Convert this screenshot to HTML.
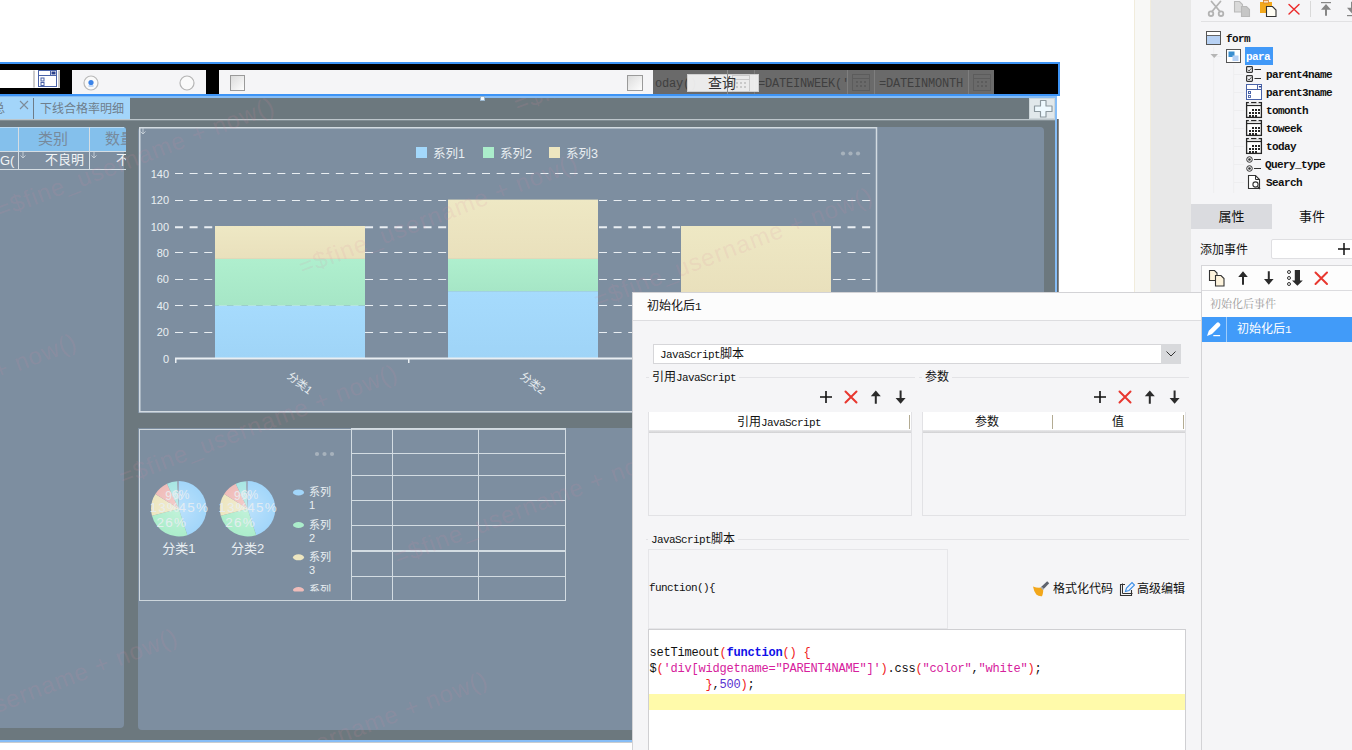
<!DOCTYPE html>
<html lang="zh-CN">
<head>
<meta charset="utf-8">
<title>FineReport Designer</title>
<style>
html,body{margin:0;padding:0;}
body{width:1352px;height:750px;position:relative;overflow:hidden;background:#fff;
  font-family:"Liberation Sans","Noto Sans CJK SC",sans-serif;font-size:12px;color:#222;}
.a{position:absolute;box-sizing:border-box;}
.sim{font-family:"Liberation Mono","Noto Sans CJK SC",monospace;font-size:11px;letter-spacing:-0.6px;}
.cjk{font-family:"Liberation Sans","Noto Sans CJK SC",sans-serif;}
.nw{white-space:nowrap;}
.wm{position:absolute;white-space:nowrap;font-size:24px;color:rgba(220,140,165,0.14);transform-origin:0 100%;transform:rotate(-21deg);font-family:"Liberation Sans",sans-serif;letter-spacing:1px;}
.hl{position:absolute;height:1px;background:#d5dde3;}
.vl{position:absolute;width:1px;background:#d5dde3;}
.code{font-family:"Liberation Mono",monospace;font-size:12px;letter-spacing:-0.2px;white-space:pre;line-height:16px;color:#111;}
.code .r{color:#f02020;} .code .b{color:#1010e8;font-weight:bold;} .code .p{color:#d6209c;} .code .n{color:#5a30d0;}
</style>
</head>
<body>

<!-- ================= DESIGNER AREA ================= -->
<div id="designer" class="a" style="left:0;top:0;width:1060px;height:750px;overflow:hidden;">
  <!-- dark background of form body -->
  <div class="a" style="left:0;top:96px;width:1055px;height:644px;background:#6c787e;"></div>
  <!-- light blue selection frame -->
  <div class="a" style="left:0;top:96px;width:1057px;height:2px;background:#86bdf6;"></div>
  <div class="a" style="left:1055px;top:96px;width:2px;height:646px;background:#86bdf6;"></div>
  <div class="a" style="left:0;top:740px;width:1057px;height:2px;background:#86bdf6;"></div>
  <div class="a" style="left:0;top:742px;width:1059px;height:1px;background:#c9cdd0;"></div>
  <div class="a" style="left:1057px;top:119px;width:2px;height:624px;background:linear-gradient(90deg,#4a4f53,#9a9fa3);"></div>

  <!-- parameter bar -->
  <div class="a" style="left:-2px;top:62px;width:1062px;height:34px;background:#000;border:2px solid #3d94f6;"></div>
  <div class="a" style="left:0;top:70px;width:34px;height:18px;background:#fff;"></div>
  <svg class="a" style="left:33px;top:70px;" width="27" height="18" viewBox="0 0 27 18">
    <rect x="0" y="0" width="27" height="18" fill="#fff"/>
    <rect x="0.5" y="0.5" width="1" height="17" fill="#999"/>
    <rect x="5.5" y="0.5" width="18" height="16" fill="#fff" stroke="#4a63a8" stroke-width="1"/>
    <line x1="5" y1="5.5" x2="24" y2="5.5" stroke="#4a63a8"/>
    <line x1="17.500" y1="0" x2="17.500" y2="5" stroke="#4a63a8"/>
    <rect x="18.500" y="1.500" width="4" height="3" fill="#2a3f8a"/>
    <rect x="8" y="8" width="3" height="3" fill="none" stroke="#4a63a8"/>
    <rect x="8" y="12.500" width="3" height="3" fill="none" stroke="#4a63a8"/>
    <rect x="25.500" y="0.500" width="1" height="17" fill="#999"/>
  </svg>
  <div class="a" style="left:72px;top:70px;width:134px;height:24px;background:#f5f5f7;"></div>
  <svg class="a" style="left:82px;top:74px;" width="18" height="18" viewBox="0 0 18 18">
    <circle cx="9" cy="9" r="7" fill="#fafafa" stroke="#b9b9b9" stroke-width="1.2"/>
    <circle cx="9" cy="8.500" r="2.600" fill="#3b83e8"/>
    <rect x="6.500" y="11.500" width="5" height="1" fill="#8ab4ee"/>
  </svg>
  <svg class="a" style="left:178px;top:74px;" width="18" height="18" viewBox="0 0 18 18">
    <circle cx="9" cy="9" r="7" fill="#fafafa" stroke="#b4b4b4" stroke-width="1.2"/>
  </svg>
  <div class="a" style="left:219px;top:70px;width:434px;height:24px;background:#f5f5f7;"></div>
  <div class="a" style="left:230px;top:75px;width:15px;height:16px;border:1px solid #9a9a9a;background:linear-gradient(135deg,#dcdcdc,#fdfdfd);"></div>
  <div class="a" style="left:627px;top:75px;width:16px;height:16px;border:1px solid #9a9a9a;background:linear-gradient(135deg,#dcdcdc,#fdfdfd);"></div>
  <!-- grey disabled fields -->
  <div class="a" style="left:653px;top:70px;width:341px;height:24px;background:#6a6a6a;"></div>
  <div class="a sim nw" style="left:655px;top:77px;color:#3f3f3f;font-size:12px;letter-spacing:-0.2px;">oday()</div>
  <div class="a" style="left:727px;top:70px;width:1px;height:24px;background:#7e7e7e;"></div>
  <div class="a" style="left:754px;top:70px;width:1px;height:24px;background:#7e7e7e;"></div>
  <div class="a" style="left:847px;top:70px;width:1px;height:24px;background:#7e7e7e;"></div>
  <div class="a" style="left:874px;top:70px;width:1px;height:24px;background:#7e7e7e;"></div>
  <div class="a" style="left:968px;top:70px;width:1px;height:24px;background:#7e7e7e;"></div>
  <div class="a sim nw" style="left:758px;top:77px;color:#3f3f3f;font-size:12px;letter-spacing:-0.2px;">=DATEINWEEK('</div>
  <div class="a sim nw" style="left:879px;top:77px;color:#3f3f3f;font-size:12px;letter-spacing:-0.2px;">=DATEINMONTH</div>
  <svg class="a" style="left:851px;top:72px;" width="20" height="20" viewBox="0 0 20 20"><g fill="none" stroke="#5c5c5c"><rect x="1.500" y="2.500" width="17" height="16"/><line x1="1" y1="6.500" x2="19" y2="6.500"/></g><g fill="#5c5c5c"><rect x="5" y="9" width="2" height="2"/><rect x="9" y="9" width="2" height="2"/><rect x="13" y="9" width="2" height="2"/><rect x="5" y="13" width="2" height="2"/><rect x="9" y="13" width="2" height="2"/><rect x="13" y="13" width="2" height="2"/></g></svg>
  <svg class="a" style="left:972px;top:72px;" width="20" height="20" viewBox="0 0 20 20"><g fill="none" stroke="#5c5c5c"><rect x="1.500" y="2.500" width="17" height="16"/><line x1="1" y1="6.500" x2="19" y2="6.500"/></g><g fill="#5c5c5c"><rect x="5" y="9" width="2" height="2"/><rect x="9" y="9" width="2" height="2"/><rect x="13" y="9" width="2" height="2"/><rect x="5" y="13" width="2" height="2"/><rect x="9" y="13" width="2" height="2"/><rect x="13" y="13" width="2" height="2"/></g></svg>
  <!-- query button -->
  <div class="a" style="left:687px;top:74px;width:72px;height:18px;background:rgba(246,246,246,0.92);border:1px solid #d0d0d0;"></div>
  <svg class="a" style="left:731px;top:73px;" width="20" height="20" viewBox="0 0 20 20"><g fill="none" stroke="#c9c9c9"><rect x="1.500" y="2.500" width="17" height="16"/><line x1="1" y1="6.500" x2="19" y2="6.500"/></g><g fill="#c9c9c9"><rect x="5" y="9" width="2" height="2"/><rect x="9" y="9" width="2" height="2"/><rect x="13" y="9" width="2" height="2"/><rect x="5" y="13" width="2" height="2"/><rect x="9" y="13" width="2" height="2"/><rect x="13" y="13" width="2" height="2"/></g></svg>
  <div class="a" style="left:727px;top:70px;width:1px;height:24px;background:#8c8c8c;"></div>
  <div class="a cjk nw" style="left:708px;top:74px;font-size:14px;line-height:19px;color:#333;">查询</div>

  <!-- tab strip -->
  <div class="a" style="left:0;top:97px;width:130px;height:22px;background:#a3d5fa;"></div>
  <div class="a" style="left:33px;top:98px;width:1px;height:21px;background:#6e7c88;"></div>
  <div class="a cjk nw" style="left:-7px;top:100px;font-size:12px;line-height:18px;color:#6f7e8c;">总</div>
  <svg class="a" style="left:19px;top:100px;" width="10" height="10" viewBox="0 0 10 10"><path d="M1 1L9 9M9 1L1 9" stroke="#7d8c9a" stroke-width="1.100" fill="none"/></svg>
  <div class="a cjk nw" style="left:40px;top:100px;font-size:12px;line-height:18px;color:#6f7e8c;">下线合格率明细</div>
  <div class="a" style="left:0;top:119px;width:1055px;height:1px;background:#bcc5ca;"></div><div class="a" style="left:0;top:120px;width:1055px;height:1px;background:#828e94;"></div>
  <div class="a" style="left:480px;top:96px;width:5px;height:5px;background:#f4f8fb;border:1px solid #9bb7cf;"></div>
  <!-- plus button -->
  <div class="a" style="left:1029px;top:98px;width:26px;height:21px;background:#e1e8eb;border:1px solid #cdd6da;"></div>
  <svg class="a" style="left:1032px;top:98px;" width="23" height="21" viewBox="0 0 23 21"><path d="M8.500 2.500h5.500v5.500h6v5.500h-6v5.500h-5.500v-5.500h-6v-5.500h6z" fill="#eef9fe" stroke="#8c989e" stroke-width="1.150" stroke-linejoin="round"/></svg>

  <!-- left panel -->
  <div class="a" style="left:0;top:127px;width:124px;height:601px;background:#7d8ea0;border-radius:0 4px 4px 0;"></div>
  <div class="a" style="left:0;top:127px;width:126px;height:24px;background:#84c0ec;border-radius:0 3px 0 0;overflow:hidden;">
    <div class="a cjk nw" style="left:38px;top:2px;font-size:15px;line-height:20px;color:#778a9c;">类别</div>
    <div class="a cjk nw" style="left:105px;top:2px;font-size:15px;line-height:20px;color:#778a9c;">数量</div>
  </div>
  <div class="a" style="left:0;top:151px;width:126px;height:18px;overflow:hidden;">
    <div class="a nw" style="left:0px;top:1px;font-size:13px;line-height:17px;color:#f2f5f7;">G(</div>
    <div class="a cjk nw" style="left:45px;top:0px;font-size:13px;line-height:17px;color:#f2f5f7;">不良明</div>
    <div class="a cjk nw" style="left:116px;top:0px;font-size:13px;line-height:17px;color:#f2f5f7;">不良</div>
  </div>
  <div class="hl" style="left:0;top:127px;width:124px;background:#b9d9f2;"></div>
  <div class="hl" style="left:0;top:151px;width:126px;"></div>
  <div class="hl" style="left:0;top:169px;width:126px;"></div>
  <div class="vl" style="left:18px;top:127px;height:42px;"></div>
  <div class="vl" style="left:89px;top:127px;height:42px;"></div>

  <!-- main panel -->
  <div class="a" style="left:138px;top:127px;width:906px;height:603px;background:#7d8ea0;border-radius:4px;"></div>
  <div class="a" style="left:138px;top:413px;width:906px;height:15px;background:#6c787e;"></div>
<!--CHART-->
<svg class="a" style="left:0;top:0;" width="1060" height="750" viewBox="0 0 1060 750" font-family="'Liberation Sans','Noto Sans CJK SC',sans-serif">
<defs><linearGradient id="gb" x1="0" y1="0" x2="0" y2="1"><stop offset="0" stop-color="#a6dbfd"/><stop offset="1" stop-color="#9fd4f7"/></linearGradient><linearGradient id="gg" x1="0" y1="0" x2="0" y2="1"><stop offset="0" stop-color="#afefce"/><stop offset="1" stop-color="#a6e6c6"/></linearGradient><linearGradient id="gc" x1="0" y1="0" x2="0" y2="1"><stop offset="0" stop-color="#eee8c4"/><stop offset="1" stop-color="#e9e0bc"/></linearGradient></defs>
<rect x="139.750" y="127.750" width="736.750" height="284" fill="none" stroke="#d3dbe1" stroke-width="1.500"/>
<rect x="416" y="147" width="11" height="11" fill="#a3d8fb"/>
<text x="433" y="157.500" font-size="12.500" fill="#e9eef2">系列1</text>
<rect x="483" y="147" width="11" height="11" fill="#abedcb"/>
<text x="500" y="157.500" font-size="12.500" fill="#e9eef2">系列2</text>
<rect x="549" y="147" width="11" height="11" fill="#ede6c0"/>
<text x="566" y="157.500" font-size="12.500" fill="#e9eef2">系列3</text>
<circle cx="843" cy="153.500" r="2.100" fill="#a7b2bc"/>
<circle cx="850.5" cy="153.500" r="2.100" fill="#a7b2bc"/>
<circle cx="858" cy="153.500" r="2.100" fill="#a7b2bc"/>
<text x="169" y="362.5" font-size="11" fill="#e9eef2" text-anchor="end">0</text>
<text x="169" y="336.1" font-size="11" fill="#e9eef2" text-anchor="end">20</text>
<line x1="175" y1="332.5" x2="873" y2="332.5" stroke="#e9eef2" stroke-width="1" stroke-dasharray="8 6.620"/>
<text x="169" y="309.7" font-size="11" fill="#e9eef2" text-anchor="end">40</text>
<line x1="175" y1="305.5" x2="873" y2="305.5" stroke="#e9eef2" stroke-width="1" stroke-dasharray="8 6.620"/>
<text x="169" y="283.3" font-size="11" fill="#e9eef2" text-anchor="end">60</text>
<line x1="175" y1="279.5" x2="873" y2="279.5" stroke="#e9eef2" stroke-width="1" stroke-dasharray="8 6.620"/>
<text x="169" y="256.9" font-size="11" fill="#e9eef2" text-anchor="end">80</text>
<line x1="175" y1="252.5" x2="873" y2="252.5" stroke="#e9eef2" stroke-width="1" stroke-dasharray="8 6.620"/>
<text x="169" y="230.5" font-size="11" fill="#e9eef2" text-anchor="end">100</text>
<line x1="175" y1="227.3" x2="873" y2="227.3" stroke="#e9eef2" stroke-width="2" stroke-dasharray="8 6.620"/>
<text x="169" y="204.1" font-size="11" fill="#e9eef2" text-anchor="end">120</text>
<line x1="175" y1="200.5" x2="873" y2="200.5" stroke="#e9eef2" stroke-width="1" stroke-dasharray="8 6.620"/>
<text x="169" y="177.7" font-size="11" fill="#e9eef2" text-anchor="end">140</text>
<line x1="175" y1="173.5" x2="873" y2="173.5" stroke="#e9eef2" stroke-width="1" stroke-dasharray="8 6.620"/>
<rect x="215" y="305.5" width="150" height="52.5" fill="url(#gb)"/>
<rect x="215" y="258.9" width="150" height="46.6" fill="url(#gg)"/>
<rect x="215" y="226.0" width="150" height="32.9" fill="url(#gc)"/>
<rect x="448" y="291.2" width="150" height="66.8" fill="url(#gb)"/>
<rect x="448" y="258.9" width="150" height="32.3" fill="url(#gg)"/>
<rect x="448" y="199.6" width="150" height="59.3" fill="url(#gc)"/>
<rect x="681" y="325.0" width="150" height="33.0" fill="url(#gb)"/>
<rect x="681" y="292.0" width="150" height="33.0" fill="url(#gg)"/>
<rect x="681" y="226.0" width="150" height="66.0" fill="url(#gc)"/>
<rect x="175" y="357.500" width="699" height="2" fill="#e9eef2"/>
<rect x="175" y="358" width="1.500" height="5" fill="#e9eef2"/>
<rect x="408" y="358" width="1.500" height="5" fill="#e9eef2"/>
<rect x="641" y="358" width="1.500" height="5" fill="#e9eef2"/>
<rect x="873" y="358" width="1.500" height="5" fill="#e9eef2"/>
<text x="300" y="387" font-size="11" fill="#e9eef2" text-anchor="middle" transform="rotate(38 300 383)">分类1</text>
<text x="533" y="387" font-size="11" fill="#e9eef2" text-anchor="middle" transform="rotate(38 533 383)">分类2</text>
<text x="766" y="387" font-size="11" fill="#e9eef2" text-anchor="middle" transform="rotate(38 766 383)">分类3</text>
<rect x="139.500" y="429.500" width="426" height="171" fill="none" stroke="#cdd6dc" stroke-width="1"/>
<circle cx="317" cy="454" r="2.100" fill="#a7b2bc"/>
<circle cx="324.5" cy="454" r="2.100" fill="#a7b2bc"/>
<circle cx="332" cy="454" r="2.100" fill="#a7b2bc"/>
<defs><radialGradient id="pg178" cx="0.5" cy="0.5" r="0.5"><stop offset="0" stop-color="#fff" stop-opacity="0.28"/><stop offset="1" stop-color="#fff" stop-opacity="0"/></radialGradient></defs>
<path d="M178.8 508.8L178.80 481.10A27.7 27.7 0 0 1 187.36 535.14Z" fill="#a2d6fa"/>
<path d="M178.8 508.8L187.36 535.14A27.7 27.7 0 0 1 151.97 515.69Z" fill="#abedcb"/>
<path d="M178.8 508.8L151.97 515.69A27.7 27.7 0 0 1 155.41 493.96Z" fill="#ede6c0"/>
<path d="M178.8 508.8L155.41 493.96A27.7 27.7 0 0 1 167.01 483.74Z" fill="#efbcb9"/>
<path d="M178.8 508.8L167.01 483.74A27.7 27.7 0 0 1 177.06 481.15Z" fill="#a8e6e3"/>
<path d="M178.8 508.8L177.06 481.15A27.7 27.7 0 0 1 178.80 481.10Z" fill="#9fb0c0"/>
<circle cx="178.8" cy="508.8" r="27.7" fill="url(#pg178)"/>
<text x="193.8" y="512.3" font-size="13.500" fill="#e9eef2" fill-opacity="0.9" letter-spacing="1.200" text-anchor="middle">45%</text>
<text x="164.8" y="512.3" font-size="13.500" fill="#e9eef2" fill-opacity="0.9" letter-spacing="1.200" text-anchor="middle">13%</text>
<text x="171.8" y="526.8" font-size="13.500" fill="#e9eef2" fill-opacity="0.9" letter-spacing="1.200" text-anchor="middle">26%</text>
<text x="173.8" y="499.8" font-size="12" fill="#e9eef2" fill-opacity="0.9" text-anchor="middle">9%</text>
<text x="180.8" y="498.8" font-size="12" fill="#e9eef2" fill-opacity="0.9" text-anchor="middle">6%</text>
<text x="178.8" y="553.3" font-size="13" fill="#e9eef2" text-anchor="middle">分类1</text>
<defs><radialGradient id="pg247" cx="0.5" cy="0.5" r="0.5"><stop offset="0" stop-color="#fff" stop-opacity="0.28"/><stop offset="1" stop-color="#fff" stop-opacity="0"/></radialGradient></defs>
<path d="M247.6 508.8L247.60 481.10A27.7 27.7 0 0 1 256.16 535.14Z" fill="#a2d6fa"/>
<path d="M247.6 508.8L256.16 535.14A27.7 27.7 0 0 1 220.77 515.69Z" fill="#abedcb"/>
<path d="M247.6 508.8L220.77 515.69A27.7 27.7 0 0 1 224.21 493.96Z" fill="#ede6c0"/>
<path d="M247.6 508.8L224.21 493.96A27.7 27.7 0 0 1 235.81 483.74Z" fill="#efbcb9"/>
<path d="M247.6 508.8L235.81 483.74A27.7 27.7 0 0 1 245.86 481.15Z" fill="#a8e6e3"/>
<path d="M247.6 508.8L245.86 481.15A27.7 27.7 0 0 1 247.60 481.10Z" fill="#9fb0c0"/>
<circle cx="247.6" cy="508.8" r="27.7" fill="url(#pg247)"/>
<text x="262.6" y="512.3" font-size="13.500" fill="#e9eef2" fill-opacity="0.9" letter-spacing="1.200" text-anchor="middle">45%</text>
<text x="233.6" y="512.3" font-size="13.500" fill="#e9eef2" fill-opacity="0.9" letter-spacing="1.200" text-anchor="middle">13%</text>
<text x="240.6" y="526.8" font-size="13.500" fill="#e9eef2" fill-opacity="0.9" letter-spacing="1.200" text-anchor="middle">26%</text>
<text x="242.6" y="499.8" font-size="12" fill="#e9eef2" fill-opacity="0.9" text-anchor="middle">9%</text>
<text x="249.6" y="498.8" font-size="12" fill="#e9eef2" fill-opacity="0.9" text-anchor="middle">6%</text>
<text x="247.6" y="553.3" font-size="13" fill="#e9eef2" text-anchor="middle">分类2</text>
<clipPath id="lgclip"><rect x="290" y="480" width="60" height="111.500"/></clipPath><g clip-path="url(#lgclip)">
<ellipse cx="298.500" cy="492.4" rx="5.500" ry="3" fill="#a2d6fa"/>
<text x="309" y="496.4" font-size="11" fill="#e9eef2">系列</text>
<text x="309" y="509.4" font-size="11" fill="#e9eef2">1</text>
<ellipse cx="298.500" cy="525" rx="5.500" ry="3" fill="#abedcb"/>
<text x="309" y="529" font-size="11" fill="#e9eef2">系列</text>
<text x="309" y="542" font-size="11" fill="#e9eef2">2</text>
<ellipse cx="298.500" cy="557.3" rx="5.500" ry="3" fill="#ede6c0"/>
<text x="309" y="561.3" font-size="11" fill="#e9eef2">系列</text>
<text x="309" y="574.3" font-size="11" fill="#e9eef2">3</text>
<ellipse cx="298.500" cy="590" rx="5.500" ry="3" fill="#efbcb9"/>
<text x="309" y="594" font-size="11" fill="#e9eef2">系列</text>
<text x="309" y="607" font-size="11" fill="#e9eef2">4</text>
</g>
<line x1="351.5" y1="428" x2="351.5" y2="601" stroke="#d3dce2" stroke-width="1"/>
<line x1="392.5" y1="428" x2="392.5" y2="601" stroke="#d3dce2" stroke-width="1"/>
<line x1="478.5" y1="428" x2="478.5" y2="601" stroke="#d3dce2" stroke-width="1"/>
<line x1="565.5" y1="428" x2="565.5" y2="601" stroke="#d3dce2" stroke-width="1"/>
<line x1="351" y1="428.5" x2="566" y2="428.5" stroke="#d3dce2" stroke-width="1"/>
<line x1="351" y1="453.5" x2="566" y2="453.5" stroke="#d3dce2" stroke-width="1"/>
<line x1="351" y1="475.5" x2="566" y2="475.5" stroke="#d3dce2" stroke-width="1"/>
<line x1="351" y1="500.5" x2="566" y2="500.5" stroke="#d3dce2" stroke-width="1"/>
<line x1="351" y1="525.5" x2="566" y2="525.5" stroke="#d3dce2" stroke-width="1"/>
<line x1="351" y1="551" x2="566" y2="551" stroke="#d3dce2" stroke-width="2"/>
<line x1="351" y1="576.5" x2="566" y2="576.5" stroke="#d3dce2" stroke-width="1"/>
<line x1="351" y1="600.5" x2="566" y2="600.5" stroke="#d3dce2" stroke-width="1"/>
</svg>
<!--/CHART-->
  <svg class="a" style="left:140px;top:128px;" width="6" height="7" viewBox="0 0 6 7"><path d="M3 0V6M0.500 3.500L3 6L5.500 3.500" fill="none" stroke="#c9d3da" stroke-width="0.900"/></svg><svg class="a" style="left:20px;top:152px;" width="6" height="7" viewBox="0 0 6 7"><path d="M3 0V6M0.500 3.500L3 6L5.500 3.500" fill="none" stroke="#c9d3da" stroke-width="0.900"/></svg><svg class="a" style="left:91px;top:152px;" width="6" height="7" viewBox="0 0 6 7"><path d="M3 0V6M0.500 3.500L3 6L5.500 3.500" fill="none" stroke="#c9d3da" stroke-width="0.900"/></svg>
  <!-- watermark -->
  <div class="a" style="left:0;top:98px;width:1055px;height:642px;overflow:hidden;">
    <div class="wm" style="left:2px;top:98px;">=$fine_username + now()</div>
    <div class="wm" style="left:305px;top:155px;">=$fine_username + now()</div>
    <div class="wm" style="left:600px;top:188px;">=$fine_username + now()</div>
    <div class="wm" style="left:-196px;top:334px;">=$fine_username + now()</div>
    <div class="wm" style="left:125px;top:365px;">=$fine_username + now()</div>
    <div class="wm" style="left:400px;top:445px;">=$fine_username + now()</div>
    <div class="wm" style="left:-95px;top:629px;">=$fine_username + now()</div>
    <div class="wm" style="left:215px;top:672px;">=$fine_username + now()</div>
    <div class="wm" style="left:760px;top:352px;">=$fine_username + now()</div>
    <div class="wm" style="left:520px;top:-8px;">=$fine_username + now()</div>
  </div>
</div>

<!--RIGHT-->
<!-- ================= RIGHT STRIP + PANEL ================= -->
<div class="a" style="left:1134px;top:0;width:17px;height:750px;background:#f8f8f6;border-left:1px solid #f1ecdc;border-right:1px solid #f1ecdc;"></div>
<div class="a" style="left:1151px;top:0;width:40px;height:750px;background:#e8e8e8;"></div>
<div id="rpanel" class="a" style="left:1191px;top:0;width:161px;height:750px;background:#f5f5f7;overflow:hidden;">
  <!-- toolbar icons (coords relative to panel: x-1191) -->
  <svg class="a" style="left:0;top:0;" width="161" height="24" viewBox="1191 0 161 24">
    <!-- scissors -->
    <g fill="none" stroke="#b3b3b3" stroke-width="1.800" stroke-linecap="round">
      <path d="M1211.500 1.500L1220 11.500M1220.500 1.500L1212 11.500"/>
      <circle cx="1211" cy="13.700" r="2.300"/><circle cx="1221" cy="13.700" r="2.300"/>
    </g>
    <!-- copy -->
    <g stroke="#b9b9b9" stroke-width="1.100">
      <path d="M1234.500 1.500h5l3 3v7.500h-8z" fill="#d9d9d9"/>
      <path d="M1241.500 6.500h5l3 3v7h-8z" fill="#c6c6c6"/>
    </g>
    <!-- paste -->
    <path d="M1260 2h12v11h-12z" fill="#f2a81d"/>
    <rect x="1263.500" y="0.500" width="5" height="2.500" fill="#fbe3c0" stroke="#d9822b" stroke-width="0.800"/>
    <path d="M1266.500 6.500h6l3.500 3.500v6.500h-9.500z" fill="#fffdf4" stroke="#333" stroke-width="1.100"/>
    <!-- red X -->
    <path d="M1289 4.500L1299 14M1299 4.500L1289 14" stroke="#ec2a2a" stroke-width="1.400" fill="none" stroke-linecap="round"/>
    <!-- separator -->
    <rect x="1310" y="1" width="1" height="16" fill="#d9d9d9"/>
    <!-- to top -->
    <rect x="1321" y="2" width="10" height="1.200" fill="#868686"/><path d="M1326 4L1331 9.800H1327V15.800H1325V9.800H1321Z" fill="#868686"/>
    <!-- to bottom -->
    <rect x="1347" y="15" width="10" height="1.200" fill="#868686"/><path d="M1352 13.500L1357 7.700H1353V1.700H1351V7.700H1347Z" fill="#868686"/>
    <rect x="1201" y="21" width="151" height="1" fill="#e1e1e3"/>
  </svg>

  <!-- tree -->
  <svg class="a" style="left:0;top:24px;" width="161" height="176" viewBox="1191 24 161 176">
    <!-- guide lines -->
    <rect x="1213.500" y="47" width="0.600" height="146" fill="#e9e9ec"/>
    <rect x="1233.500" y="65" width="0.600" height="128" fill="#e9e9ec"/><rect x="1234" y="74" width="10" height="0.600" fill="#e9e9ec"/><rect x="1234" y="92" width="10" height="0.600" fill="#e9e9ec"/><rect x="1234" y="110" width="10" height="0.600" fill="#e9e9ec"/><rect x="1234" y="128" width="10" height="0.600" fill="#e9e9ec"/><rect x="1234" y="146" width="10" height="0.600" fill="#e9e9ec"/><rect x="1234" y="164" width="10" height="0.600" fill="#e9e9ec"/><rect x="1234" y="182" width="10" height="0.600" fill="#e9e9ec"/><rect x="1214" y="56" width="8" height="0.600" fill="#e9e9ec"/>
    <!-- form icon -->
    <rect x="1206.500" y="31.500" width="14" height="13" fill="#fff" stroke="#555" stroke-width="1"/>
    <rect x="1207" y="36" width="13" height="8" fill="#b7d1f4"/>
    <rect x="1207" y="35" width="13" height="1" fill="#666"/>
    <!-- expand arrow -->
    <path d="M1210.500 54h7.500l-3.750 4z" fill="#b5b5b5"/>
    <!-- para icon -->
    <rect x="1226.500" y="49.500" width="14" height="13" fill="#fff" stroke="#555" stroke-width="1"/>
    <rect x="1228.500" y="51.500" width="6" height="5.500" fill="#3b8fd0"/>
    <rect x="1232.500" y="55.500" width="6" height="5.500" fill="#b7d1f4"/>
    <!-- para selection -->
    <rect x="1245" y="47" width="28" height="18" fill="#4199f8"/>
    <!-- parent4name icon (checkbox group) -->
    <g fill="none" stroke="#333" stroke-width="1.200"><rect x="1246.600" y="66.600" width="5.800" height="5.800" rx="0.800"/><rect x="1246.600" y="75.600" width="5.800" height="5.800" rx="0.800"/><path d="M1254.500 69.500h6.500M1254.500 78.500h6.500"/><path d="M1248 69.800l1.200 1.200l2.200 -2.800M1248 78.800l1.200 1.200l2.200 -2.800" stroke-width="0.900"/></g>
    <!-- parent3name icon (combo) -->
    <rect x="1246.500" y="84.500" width="15" height="15" fill="#fff" stroke="#4a63a8" stroke-width="1"/>
    <path d="M1246 89.500h16M1257.500 84v5" stroke="#4a63a8" fill="none"/>
    <path d="M1258.500 86h3l-1.500 2z" fill="#2a3f8a"/>
    <rect x="1248.500" y="91.500" width="2" height="2" fill="none" stroke="#4a63a8"/><rect x="1248.500" y="95.500" width="2" height="2" fill="none" stroke="#4a63a8" stroke-width="0.900"/>
    <!-- calendars -->
    <g>
      <rect x="1246.600" y="102.600" width="14.800" height="14.800" fill="#fff" stroke="#262626" stroke-width="1.300"/>
      <path d="M1246 105.500h16" stroke="#262626" stroke-width="1.200"/>
      <path d="M1250 101.500v2M1257.500 101.500v2" stroke="#f5f5f7" stroke-width="2.200"/>
      <g fill="#262626"><rect x="1252" y="109" width="2" height="2"/><rect x="1255" y="109" width="2" height="2"/><rect x="1258" y="109" width="2" height="2"/><rect x="1249" y="112" width="2" height="2"/><rect x="1252" y="112" width="2" height="2"/><rect x="1255" y="112" width="2" height="2"/><rect x="1258" y="112" width="2" height="2"/><rect x="1249" y="115" width="2" height="2"/><rect x="1252" y="115" width="2" height="2"/><rect x="1255" y="115" width="2" height="2"/></g>
    </g>
    <g transform="translate(0 18)">
      <rect x="1246.600" y="102.600" width="14.800" height="14.800" fill="#fff" stroke="#262626" stroke-width="1.300"/>
      <path d="M1246 105.500h16" stroke="#262626" stroke-width="1.200"/>
      <path d="M1250 101.500v2M1257.500 101.500v2" stroke="#f5f5f7" stroke-width="2.200"/>
      <g fill="#262626"><rect x="1252" y="109" width="2" height="2"/><rect x="1255" y="109" width="2" height="2"/><rect x="1258" y="109" width="2" height="2"/><rect x="1249" y="112" width="2" height="2"/><rect x="1252" y="112" width="2" height="2"/><rect x="1255" y="112" width="2" height="2"/><rect x="1258" y="112" width="2" height="2"/><rect x="1249" y="115" width="2" height="2"/><rect x="1252" y="115" width="2" height="2"/><rect x="1255" y="115" width="2" height="2"/></g>
    </g><g transform="translate(0 36)">
      <rect x="1246.600" y="102.600" width="14.800" height="14.800" fill="#fff" stroke="#262626" stroke-width="1.300"/>
      <path d="M1246 105.500h16" stroke="#262626" stroke-width="1.200"/>
      <path d="M1250 101.500v2M1257.500 101.500v2" stroke="#f5f5f7" stroke-width="2.200"/>
      <g fill="#262626"><rect x="1252" y="109" width="2" height="2"/><rect x="1255" y="109" width="2" height="2"/><rect x="1258" y="109" width="2" height="2"/><rect x="1249" y="112" width="2" height="2"/><rect x="1252" y="112" width="2" height="2"/><rect x="1255" y="112" width="2" height="2"/><rect x="1258" y="112" width="2" height="2"/><rect x="1249" y="115" width="2" height="2"/><rect x="1252" y="115" width="2" height="2"/><rect x="1255" y="115" width="2" height="2"/></g>
    </g>
    <!-- Query_type (radio group) -->
    <g fill="none" stroke="#333" stroke-width="1"><circle cx="1249.500" cy="159.500" r="2.800"/><circle cx="1249.500" cy="168.500" r="2.800"/><path d="M1254 159.500h7M1254 168.500h7"/></g>
    <circle cx="1249.500" cy="159.500" r="1.300" fill="#333"/><circle cx="1249.500" cy="168.500" r="1.300" fill="#333"/>
    <!-- Search icon -->
    <path d="M1248.500 175.500h7l4 4v9h-11z" fill="#fff" stroke="#333" stroke-width="1.100"/>
    <path d="M1255.500 175.500v4h4" fill="none" stroke="#333" stroke-width="1"/>
    <circle cx="1255.500" cy="184.500" r="2.600" fill="#fff" stroke="#333" stroke-width="1.100"/><path d="M1257.500 186.500l2.500 2.500" stroke="#333" stroke-width="1.300"/>
    <!-- labels -->
    <g font-family="'Liberation Mono',monospace" font-size="11" font-weight="bold" fill="#111" letter-spacing="-0.600">
      <text x="1226" y="42">form</text>
      <text x="1246" y="60" fill="#fff">para</text>
      <text x="1266" y="78">parent4name</text>
      <text x="1266" y="96">parent3name</text>
      <text x="1266" y="114">tomonth</text>
      <text x="1266" y="132">toweek</text>
      <text x="1266" y="150">today</text>
      <text x="1265" y="168">Query_type</text>
      <text x="1266" y="186">Search</text>
    </g>
  </svg>

  <!-- tabs -->
  <div class="a" style="left:0;top:204px;width:81px;height:25px;background:#dadbdf;"></div>
  <div class="a cjk nw" style="left:0;top:204px;width:81px;height:25px;line-height:25px;text-align:center;font-size:13px;color:#111;">属性</div>
  <div class="a cjk nw" style="left:81px;top:204px;width:80px;height:25px;line-height:25px;text-align:center;font-size:13px;color:#111;">事件</div>

  <!-- add event -->
  <div class="a cjk nw" style="left:9px;top:241px;font-size:12px;line-height:18px;color:#111;">添加事件</div>
  <div class="a" style="left:80px;top:239px;width:90px;height:20px;background:#fff;border:1px solid #dfdfe2;border-radius:2px;"></div>
  <svg class="a" style="left:146px;top:242px;" width="15" height="14" viewBox="0 0 15 14"><path d="M7 1v12M1 7h12" stroke="#111" stroke-width="1.500" fill="none"/></svg>

  <!-- event list box -->
  <div class="a" style="left:10px;top:265px;width:160px;height:500px;background:#f5f5f7;border:1px solid #d6d6d9;"></div>
  <div class="a" style="left:11px;top:266px;width:150px;height:51px;background:#fdfdfd;"></div>
  <div class="a" style="left:11px;top:290px;width:150px;height:1px;background:#dcdcdf;"></div>
  <svg class="a" style="left:11px;top:266px;" width="150" height="24" viewBox="1202 266 150 24">
    <!-- copy -->
    <path d="M1209.500 270.500h5l2.500 2.500v7.500h-7.500z" fill="#fdf3dc" stroke="#333" stroke-width="1.100"/>
    <path d="M1215.500 275.500h5.500l3 3v7.500h-8.500z" fill="#fdf3dc" stroke="#333" stroke-width="1.100"/>
    <!-- up -->
    <path d="M1243 271.3L1247.8 277.1H1244.0V284.7H1242.0V277.1H1238.2Z" fill="#2b2b2b"/>
    <!-- down -->
    <path d="M1268.8 284.7L1273.6 278.9H1269.8V271.3H1267.8V278.9H1264.0Z" fill="#2b2b2b"/>
    <!-- sort down -->
    <g fill="none" stroke="#333" stroke-width="1"><circle cx="1289" cy="272" r="1.500"/><circle cx="1289" cy="278" r="1.500"/><circle cx="1289" cy="284" r="1.500"/></g>
    <path d="M1294.800 270H1300V280.400H1302.800L1297.400 285.700L1292 280.400H1294.800Z" fill="#2b2b2b"/>
    <!-- red x -->
    <path d="M1315.500 272.500L1327 284M1327 272.500L1315.500 284" stroke="#e8372f" stroke-width="2" fill="none" stroke-linecap="round"/>
  </svg>
  <div class="a nw" style="left:19px;top:296px;font-family:'Liberation Serif','Noto Serif CJK SC',serif;font-size:11px;line-height:16px;color:#9a9a9a;">初始化后事件</div>
  <div class="a" style="left:11px;top:317px;width:150px;height:25px;background:#419bf9;"></div>
  <div class="a" style="left:35px;top:317px;width:1px;height:25px;background:#9fcdfb;"></div>
  <svg class="a" style="left:15px;top:321px;" width="18" height="18" viewBox="0 0 18 18"><path d="M1 15l1.800 -5.200l8 -8q1.200 -1.200 2.800 0.400q1.600 1.600 0.400 2.800l-8 8z" fill="#fff"/><rect x="7.300" y="14" width="6.800" height="1.200" fill="#fff"/></svg>
  <div class="a cjk nw" style="left:46px;top:320px;font-size:12px;line-height:18px;color:#fff;">初始化后<span style="font-family:'Liberation Mono',monospace;font-size:11px;">1</span></div>
</div>
<!--/RIGHT-->

<!--DIALOG-->
<!-- ================= DIALOG ================= -->
<div id="dialog" class="a" style="left:632px;top:292px;width:570px;height:470px;background:#f5f5f7;border:1px solid #d3d3d6;overflow:hidden;">
  <!-- coordinates inside = abs - (633,293) -->
  <div class="a" style="left:0;top:0;width:568px;height:28px;background:#fcfcfc;border-bottom:1px solid #dddde0;"></div>
  <div class="a cjk nw" style="left:14px;top:4px;font-size:12px;line-height:18px;color:#111;">初始化后<span class="sim">1</span></div>

  <!-- combo -->
  <div class="a" style="left:20px;top:51px;width:528px;height:20px;background:#fff;border:1px solid #d6d6d9;"></div>
  <div class="a" style="left:528px;top:51px;width:20px;height:20px;background:#d8d9dc;"></div>
  <svg class="a" style="left:532px;top:56px;" width="12" height="10" viewBox="0 0 12 10"><path d="M1.500 2.500L6 7L10.500 2.500" fill="none" stroke="#333" stroke-width="1"/></svg>
  <div class="a cjk nw" style="left:27px;top:52px;font-size:12px;line-height:18px;color:#111;"><span class="sim">JavaScript</span>脚本</div>

  <!-- fieldset 1 -->
  <div class="a" style="left:13px;top:84px;width:269px;height:1px;background:#e3e3e6;"></div>
  <div class="a cjk nw" style="left:16px;top:75px;padding:0 3px;background:#f5f5f7;font-size:12px;line-height:18px;color:#111;">引用<span class="sim">JavaScript</span></div>
  <!-- fieldset 2 -->
  <div class="a" style="left:286px;top:84px;width:270px;height:1px;background:#e3e3e6;"></div>
  <div class="a cjk nw" style="left:289px;top:75px;padding:0 3px;background:#f5f5f7;font-size:12px;line-height:18px;color:#111;">参数</div>

  <!-- icon rows -->
  <svg class="a" style="left:180px;top:96px;" width="380" height="18" viewBox="813 389 380 18">
    <g>
      <path d="M826 391v12M820 397h12" stroke="#111" stroke-width="1.600" fill="none"/>
      <path d="M845.500 391.500L856.500 402.500M856.500 391.500L845.500 402.500" stroke="#e8372f" stroke-width="2" fill="none" stroke-linecap="round"/>
      <path d="M875.8 390.4L880.8 396.2H876.8V403.79999999999995H874.8V396.2H870.8Z" fill="#2b2b2b"/>
      <path d="M900.6 403.79999999999995L905.6 397.99999999999994H901.6V390.4H899.6V397.99999999999994H895.6Z" fill="#2b2b2b"/>
    </g>
    <g transform="translate(274 0)">
      <path d="M826 391v12M820 397h12" stroke="#111" stroke-width="1.600" fill="none"/>
      <path d="M845.500 391.500L856.500 402.500M856.500 391.500L845.500 402.500" stroke="#e8372f" stroke-width="2" fill="none" stroke-linecap="round"/>
      <path d="M875.8 390.4L880.8 396.2H876.8V403.79999999999995H874.8V396.2H870.8Z" fill="#2b2b2b"/>
      <path d="M900.6 403.79999999999995L905.6 397.99999999999994H901.6V390.4H899.6V397.99999999999994H895.6Z" fill="#2b2b2b"/>
    </g>
  </svg>

  <!-- table 1 -->
  <div class="a" style="left:15px;top:119px;width:264px;height:104px;border:1px solid #e2e2e5;background:#f5f5f7;"></div>
  <div class="a" style="left:16px;top:119px;width:262px;height:18px;background:#fff;"></div>
  <div class="a" style="left:16px;top:137px;width:262px;height:3px;background:linear-gradient(#eaeaec,#d0d0d2);"></div>
  <div class="a" style="left:276px;top:122px;width:1px;height:14px;background:#b3ab92;"></div>
  <div class="a cjk nw" style="left:16px;top:120px;width:260px;text-align:center;font-size:12px;line-height:18px;color:#111;">引用<span class="sim">JavaScript</span></div>
  <!-- table 2 -->
  <div class="a" style="left:289px;top:119px;width:264px;height:104px;border:1px solid #e2e2e5;background:#f5f5f7;"></div>
  <div class="a" style="left:290px;top:119px;width:262px;height:18px;background:#fff;"></div>
  <div class="a" style="left:290px;top:137px;width:262px;height:3px;background:linear-gradient(#eaeaec,#d0d0d2);"></div>
  <div class="a" style="left:419px;top:122px;width:1px;height:14px;background:#b3ab92;"></div>
  <div class="a" style="left:550px;top:122px;width:1px;height:14px;background:#b3ab92;"></div>
  <div class="a cjk nw" style="left:290px;top:120px;width:128px;text-align:center;font-size:12px;line-height:18px;color:#111;">参数</div>
  <div class="a cjk nw" style="left:420px;top:120px;width:130px;text-align:center;font-size:12px;line-height:18px;color:#111;">值</div>

  <!-- fieldset 3 -->
  <div class="a" style="left:13px;top:246px;width:543px;height:1px;background:#e3e3e6;"></div>
  <div class="a cjk nw" style="left:15px;top:237px;padding:0 3px;background:#f5f5f7;font-size:12px;line-height:18px;color:#111;"><span class="sim">JavaScript</span>脚本</div>
  <!-- function box -->
  <div class="a" style="left:15px;top:256px;width:300px;height:80px;border:1px solid #e6e6e9;"></div>
  <div class="a sim nw" style="left:16px;top:286px;line-height:18px;color:#111;">function(){</div>
  <!-- format / advanced -->
  <svg class="a" style="left:398px;top:287px;" width="20" height="18" viewBox="1031 580 20 18"><path d="M1047.200 581.200L1049.200 583.200L1043.200 589.600L1040.800 587.200Z" fill="#5f646e"/><path d="M1041.600 586.400L1044 588.800L1042.600 590.300L1040.200 587.900Z" fill="#a9adb5"/><path d="M1033 586.400Q1037 588 1040.400 587.600L1043.300 590.500Q1043 594 1042 596.300Q1038.500 596.600 1036.300 594.600Q1033.800 591 1033 586.400Z" fill="#f2a71b"/></svg>
  <div class="a cjk nw" style="left:420px;top:287px;font-size:12px;line-height:18px;color:#111;">格式化代码</div>
  <svg class="a" style="left:486px;top:288px;" width="16" height="16" viewBox="0 0 16 16">
    <path d="M6 3.500H1.500V14.500H12.500V9" fill="none" stroke="#333" stroke-width="1.100"/>
    <path d="M3.500 2.500v10h10" fill="none" stroke="#333" stroke-width="1"/>
    <path d="M6.500 10.500l1 -3.500l5.500 -5.500l2.500 2.500l-5.500 5.500z" fill="#eaf3ff" stroke="#3a8ee6" stroke-width="1.100"/>
  </svg>
  <div class="a cjk nw" style="left:504px;top:287px;font-size:12px;line-height:18px;color:#111;">高级编辑</div>

  <!-- code editor -->
  <div class="a" style="left:15px;top:336px;width:538px;height:140px;background:#fff;border:1px solid #cfcfd2;"></div>
  <div class="a" style="left:16px;top:401px;width:536px;height:16px;background:#fffaaa;"></div>
  <div class="a code" style="left:16.400px;top:352px;">setTimeout<span class="r">(</span><span class="b">function</span><span class="r">() {</span>
$<span class="r">(</span><span class="p">'div[widgetname="PARENT4NAME"]'</span><span class="r">)</span>.css<span class="r">(</span><span class="p">"color"</span>,<span class="p">"white"</span><span class="r">)</span>;
        <span class="r">}</span>,<span class="n">500</span><span class="r">)</span>;</div>
</div>
<!--/DIALOG-->

</body>
</html>
